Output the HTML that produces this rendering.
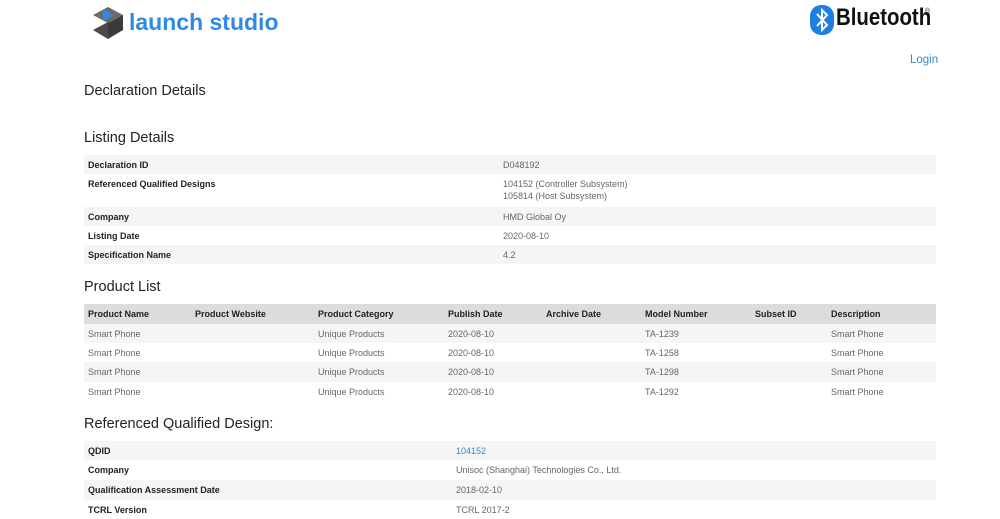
<!DOCTYPE html>
<html><head><meta charset="utf-8"><style>
*{margin:0;padding:0;box-sizing:border-box}
body{width:1000px;height:508px;overflow:hidden;background:#fff;font-family:"Liberation Sans",Arial,sans-serif;position:relative}
.a{position:absolute;white-space:nowrap}
.h{font-size:14.5px;color:#222}
.row{position:absolute;left:84px;width:852px}
.g{background:#f5f5f5}
.hd{background:#dcdcdc}
.l{font-size:9px;color:#222;font-weight:bold;position:absolute;top:5px}
.v{font-size:9px;color:#666;position:absolute;top:5px;line-height:12px;top:4px}
.bl{color:#3a86c8}
</style></head><body>
<svg class="a" style="left:90px;top:5px" width="36" height="38" viewBox="0 0 36 38">
<polygon points="3,10 18,2 33,10 18,18" fill="#6a6a6a"/>
<polygon points="3,25 18,17 33,25 18,34" fill="#4a4a4a"/>
<polygon points="18,18 33,10 33,25 18,33" fill="#3a3a3a"/>
<polygon points="13,4 24,10 13,16" fill="#2e8ae6"/>
</svg>
<div class="a" style="left:129px;top:9px;font-size:23px;color:#2e8ae6;font-weight:bold">launch studio</div>
<svg class="a" style="left:810px;top:5px" width="24" height="30" viewBox="0 0 24 30"><rect x="0" y="0" width="24" height="30" rx="11" fill="#1f7fe0"/><path d="M7,9 L17,20 L12,25 L12,5 L17,10 L7,21" stroke="#fff" stroke-width="2" fill="none"/></svg>
<div class="a" style="left:836px;top:4px;font-size:24px;font-weight:bold;color:#111;transform:scaleX(0.85);transform-origin:left">Bluetooth</div>
<div class="a" style="left:925px;top:8px;font-size:7px;color:#333">®</div>
<div class="a bl" style="left:910px;top:54px;font-size:11.5px">Login</div>
<div class="a h" style="left:84px;top:83px">Declaration Details</div>
<div class="a h" style="left:84px;top:130px">Listing Details</div>
<div class="row g" style="top:155px;height:19px"><span class="l" style="left:4px">Declaration ID</span><span class="v" style="left:419px">D048192</span></div>
<div class="row" style="top:174px;height:33px"><span class="l" style="left:4px">Referenced Qualified Designs</span><span class="v" style="left:419px">104152 (Controller Subsystem)<br>105814 (Host Subsystem)</span></div>
<div class="row g" style="top:207px;height:19px"><span class="l" style="left:4px">Company</span><span class="v" style="left:419px">HMD Global Oy</span></div>
<div class="row" style="top:226px;height:19px"><span class="l" style="left:4px">Listing Date</span><span class="v" style="left:419px">2020-08-10</span></div>
<div class="row g" style="top:245px;height:19px"><span class="l" style="left:4px">Specification Name</span><span class="v" style="left:419px">4.2</span></div>
<div class="a h" style="left:84px;top:279px">Product List</div>
<div class="row hd" style="top:304px;height:20px">
<span class="l" style="left:4px">Product Name</span><span class="l" style="left:111px">Product Website</span><span class="l" style="left:234px">Product Category</span><span class="l" style="left:364px">Publish Date</span><span class="l" style="left:462px">Archive Date</span><span class="l" style="left:561px">Model Number</span><span class="l" style="left:671px">Subset ID</span><span class="l" style="left:747px">Description</span></div>
<div class="row g" style="top:324px;height:19px"><span class="v" style="left:4px">Smart Phone</span><span class="v" style="left:234px">Unique Products</span><span class="v" style="left:364px">2020-08-10</span><span class="v" style="left:561px">TA-1239</span><span class="v" style="left:747px">Smart Phone</span></div>
<div class="row" style="top:343px;height:19px"><span class="v" style="left:4px">Smart Phone</span><span class="v" style="left:234px">Unique Products</span><span class="v" style="left:364px">2020-08-10</span><span class="v" style="left:561px">TA-1258</span><span class="v" style="left:747px">Smart Phone</span></div>
<div class="row g" style="top:362px;height:20px"><span class="v" style="left:4px">Smart Phone</span><span class="v" style="left:234px">Unique Products</span><span class="v" style="left:364px">2020-08-10</span><span class="v" style="left:561px">TA-1298</span><span class="v" style="left:747px">Smart Phone</span></div>
<div class="row" style="top:382px;height:19px"><span class="v" style="left:4px">Smart Phone</span><span class="v" style="left:234px">Unique Products</span><span class="v" style="left:364px">2020-08-10</span><span class="v" style="left:561px">TA-1292</span><span class="v" style="left:747px">Smart Phone</span></div>
<div class="a h" style="left:84px;top:416px">Referenced Qualified Design:</div>
<div class="row g" style="top:441px;height:19px"><span class="l" style="left:4px">QDID</span><span class="v bl" style="left:372px">104152</span></div>
<div class="row" style="top:460px;height:20px"><span class="l" style="left:4px">Company</span><span class="v" style="left:372px">Unisoc (Shanghai) Technologies Co., Ltd.</span></div>
<div class="row g" style="top:480px;height:20px"><span class="l" style="left:4px">Qualification Assessment Date</span><span class="v" style="left:372px">2018-02-10</span></div>
<div class="row" style="top:500px;height:19px"><span class="l" style="left:4px">TCRL Version</span><span class="v" style="left:372px">TCRL 2017-2</span></div>
</body></html>
